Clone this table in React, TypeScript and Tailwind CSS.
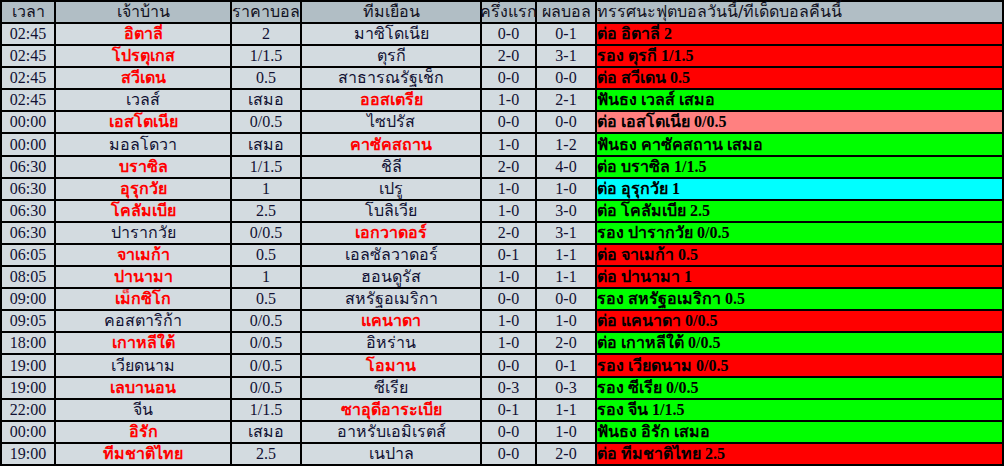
type Row = {
  time: string
  home: string
  homeRed: boolean
  odds: string
  away: string
  half: string
  full: string
  tip: string
  tipBg: string
}

const RED = "bg-[#ff0000]"
const GREEN = "bg-[#00ff00]"
const CYAN = "bg-[#00ffff]"
const PINK = "bg-[#ff8080]"

const rows: Row[] = [
  { time: "02:45", home: "อิตาลี่", homeRed: true, odds: "2", away: "มาซิโดเนีย", half: "0-0", full: "0-1", tip: "ต่อ อิตาลี่ 2", tipBg: RED },
  { time: "02:45", home: "โปรตุเกส", homeRed: true, odds: "1/1.5", away: "ตุรกี", half: "2-0", full: "3-1", tip: "รอง ตุรกี 1/1.5", tipBg: RED },
  { time: "02:45", home: "สวีเดน", homeRed: true, odds: "0.5", away: "สาธารณรัฐเช็ก", half: "0-0", full: "0-0", tip: "ต่อ สวีเดน 0.5", tipBg: RED },
  { time: "02:45", home: "เวลส์", homeRed: false, odds: "เสมอ", away: "ออสเตรีย", half: "1-0", full: "2-1", tip: "ฟันธง เวลส์ เสมอ", tipBg: GREEN },
  { time: "00:00", home: "เอสโตเนีย", homeRed: true, odds: "0/0.5", away: "ไซปรัส", half: "0-0", full: "0-0", tip: "ต่อ เอสโตเนีย 0/0.5", tipBg: PINK },
  { time: "00:00", home: "มอลโดวา", homeRed: false, odds: "เสมอ", away: "คาซัคสถาน", half: "1-0", full: "1-2", tip: "ฟันธง คาซัคสถาน เสมอ", tipBg: GREEN },
  { time: "06:30", home: "บราซิล", homeRed: true, odds: "1/1.5", away: "ชิลี", half: "2-0", full: "4-0", tip: "ต่อ บราซิล 1/1.5", tipBg: GREEN },
  { time: "06:30", home: "อุรุกวัย", homeRed: true, odds: "1", away: "เปรู", half: "1-0", full: "1-0", tip: "ต่อ อุรุกวัย 1", tipBg: CYAN },
  { time: "06:30", home: "โคลัมเบีย", homeRed: true, odds: "2.5", away: "โบลิเวีย", half: "1-0", full: "3-0", tip: "ต่อ โคลัมเบีย 2.5", tipBg: GREEN },
  { time: "06:30", home: "ปารากวัย", homeRed: false, odds: "0/0.5", away: "เอกวาดอร์", half: "2-0", full: "3-1", tip: "รอง ปารากวัย 0/0.5", tipBg: GREEN },
  { time: "06:05", home: "จาเมก้า", homeRed: true, odds: "0.5", away: "เอลซัลวาดอร์", half: "0-1", full: "1-1", tip: "ต่อ จาเมก้า 0.5", tipBg: RED },
  { time: "08:05", home: "ปานามา", homeRed: true, odds: "1", away: "ฮอนดูรัส", half: "1-0", full: "1-1", tip: "ต่อ ปานามา 1", tipBg: RED },
  { time: "09:00", home: "เม็กซิโก", homeRed: true, odds: "0.5", away: "สหรัฐอเมริกา", half: "0-0", full: "0-0", tip: "รอง สหรัฐอเมริกา 0.5", tipBg: GREEN },
  { time: "09:05", home: "คอสตาริก้า", homeRed: false, odds: "0/0.5", away: "แคนาดา", half: "1-0", full: "1-0", tip: "ต่อ แคนาดา 0/0.5", tipBg: RED },
  { time: "18:00", home: "เกาหลีใต้", homeRed: true, odds: "0/0.5", away: "อิหร่าน", half: "1-0", full: "2-0", tip: "ต่อ เกาหลีใต้ 0/0.5", tipBg: GREEN },
  { time: "19:00", home: "เวียดนาม", homeRed: false, odds: "0/0.5", away: "โอมาน", half: "0-0", full: "0-1", tip: "รอง เวียดนาม 0/0.5", tipBg: RED },
  { time: "19:00", home: "เลบานอน", homeRed: true, odds: "0/0.5", away: "ซีเรีย", half: "0-3", full: "0-3", tip: "รอง ซีเรีย 0/0.5", tipBg: GREEN },
  { time: "22:00", home: "จีน", homeRed: false, odds: "1/1.5", away: "ซาอุดีอาระเบีย", half: "0-1", full: "1-1", tip: "รอง จีน 1/1.5", tipBg: GREEN },
  { time: "00:00", home: "อิรัก", homeRed: true, odds: "เสมอ", away: "อาหรับเอมิเรตส์", half: "0-0", full: "1-0", tip: "ฟันธง อิรัก เสมอ", tipBg: GREEN },
  { time: "19:00", home: "ทีมชาติไทย", homeRed: true, odds: "2.5", away: "เนปาล", half: "0-0", full: "2-0", tip: "ต่อ ทีมชาติไทย 2.5", tipBg: RED },
]

const headers = ["เวลา", "เจ้าบ้าน", "ราคาบอล", "ทีมเยือน", "ครึ่งแรก", "ผลบอล"]

const cell = "bg-[#d3dbe0] flex items-center justify-center whitespace-nowrap overflow-hidden leading-none text-[16px] text-[#111133]"
const team = "font-['Tahoma','DejaVu_Sans',sans-serif]"
const redTeam = "font-bold text-[#ff0000]"
const head = "bg-[#b1bec5] flex items-center whitespace-nowrap text-[16px] text-[#111122] font-['Tahoma','DejaVu_Sans',sans-serif]"

export default function App() {
  return (
    <div className="w-[1004px] bg-white">
      <div className="grid grid-cols-[52px_174px_68px_178px_53px_58px_405px] grid-rows-[20px_20px_20px_20px_20px_20px_21px_20px_20px_20px_20px_20px_20px_20px_20px_20px_21px_20px_20px_20px_20px] gap-[2px] bg-black p-[2px] font-['Liberation_Serif','DejaVu_Sans',serif]">
        {headers.map((h) => (
          <div key={h} className={`${head} justify-center`}>
            {h}
          </div>
        ))}
        <div className={head}>ทรรศนะฟุตบอลวันนี้/ทีเด็ดบอลคืนนี้</div>

        {rows.map((r, i) => (
          <div key={i} className="contents">
            <div className={cell}>{r.time}</div>
            <div className={`${cell} ${team} ${r.homeRed ? redTeam : ""}`}>{r.home}</div>
            <div className={`${cell} ${r.odds === "เสมอ" ? team : ""}`}>{r.odds}</div>
            <div className={`${cell} ${team} ${!r.homeRed ? redTeam : ""}`}>{r.away}</div>
            <div className={cell}>{r.half}</div>
            <div className={cell}>{r.full}</div>
            <div className={`${r.tipBg} flex items-center whitespace-nowrap overflow-hidden leading-none text-[16px] font-bold text-black`}>
              {r.tip}
            </div>
          </div>
        ))}
      </div>
    </div>
  )
}
